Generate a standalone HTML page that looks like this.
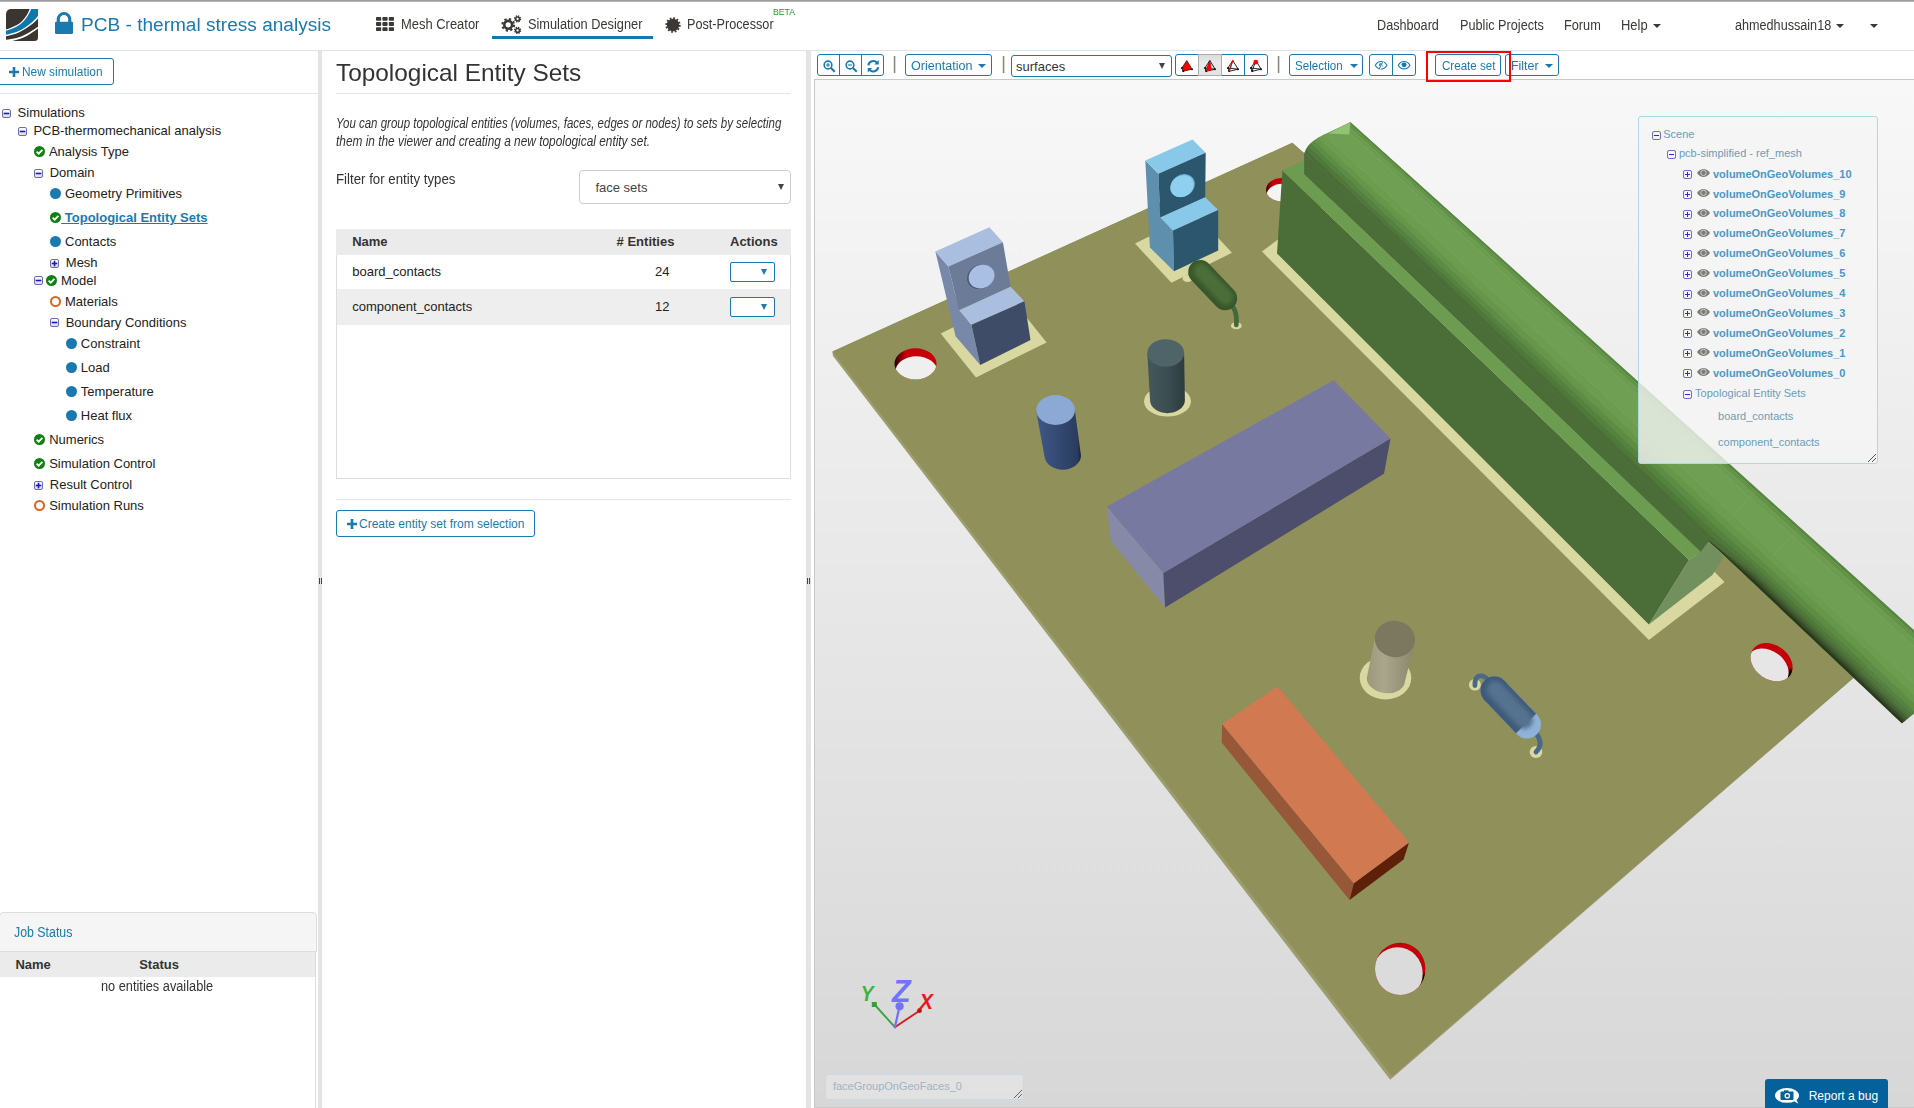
<!DOCTYPE html>
<html lang="en"><head><meta charset="utf-8"><title>PCB - thermal stress analysis</title>
<style>
html,body{margin:0;padding:0}
body{width:1914px;height:1108px;position:relative;overflow:hidden;background:#fff;font-family:'Liberation Sans',sans-serif}
.t{position:absolute;white-space:nowrap;line-height:1;display:inline-block;transform-origin:0 50%}
.a{position:absolute;box-sizing:border-box}
.btn{position:absolute;box-sizing:border-box;border:1px solid #1a7aaf;border-radius:3px;background:#fff}
.car{position:absolute;width:0;height:0;border-left:4px solid transparent;border-right:4px solid transparent;border-top:4px solid #3b3835}
.carb{position:absolute;width:0;height:0;border-left:4px solid transparent;border-right:4px solid transparent;border-top:4px solid #1a7aaf}
.sep{position:absolute;width:1px;height:17px;top:56px;margin-left:.5px;background:#8a847c;box-shadow:-1px 0 0 rgba(236,200,150,.55),1px 0 0 rgba(160,160,205,.45)}
.pm{position:absolute;box-sizing:border-box;width:9px;height:9px;border:1px solid #6c6cb8;border-radius:2px;background:linear-gradient(#fff,#ddd)}
.pm i{position:absolute;left:1px;top:3px;width:5px;height:1px;background:#1818d8;box-shadow:0 0 0 .3px #1818d8}
.pm b{position:absolute;left:3px;top:1px;width:1px;height:5px;background:#1818d8;box-shadow:0 0 0 .3px #1818d8}
.pl{border-color:#7070c0;background:#f4f4fa}.pl i,.pl b{box-shadow:none;background:#2a2ad8}
.dot{position:absolute;width:11px;height:11px;border-radius:50%;box-sizing:border-box}
svg{position:absolute;overflow:visible}
</style></head><body>
<!-- top chrome line + navbar -->
<div class="a" style="left:0;top:0;width:1914px;height:2px;background:linear-gradient(#8c8c8c,#c8c8c8)"></div>
<div class="a" style="left:0;top:50px;width:1914px;height:1px;background:#e2e2e2"></div>
<!-- logo -->
<svg style="left:6px;top:9px" width="32" height="32" viewBox="0 0 32 32">
<defs><clipPath id="lg"><path d="M5 0H32V28a4 4 0 0 1-4 4H0V5a5 5 0 0 1 5-5Z"/></clipPath></defs>
<g clip-path="url(#lg)"><rect width="32" height="32" fill="#3a3531"/><path d="M-1 20.90C1.73 20.13 7.70 17.78 10.40 16.30C13.10 14.82 14.52 13.62 16.20 12.00C17.88 10.38 19.25 8.60 20.50 6.60C21.75 4.60 23.17 1.10 23.70 0.00L33 0L33 33L-1 33Z" fill="#fff"/><path d="M-1 22.10C1.73 21.37 7.58 19.22 10.40 17.70C13.22 16.18 14.98 14.85 16.90 13.00C18.82 11.15 20.52 8.77 21.90 6.60C23.28 4.43 24.65 1.10 25.20 0.00L33 0L33 33L-1 33Z" fill="#0d78ad"/><path d="M-1 25.90C1.73 25.40 7.22 24.15 10.40 22.90C13.58 21.65 16.45 20.05 19.10 18.40C21.75 16.75 24.45 14.55 26.30 13.00C28.15 11.45 29.08 10.40 30.20 9.10C31.32 7.80 32.53 5.85 33.00 5.20L33 33L-1 33Z" fill="#fff"/><path d="M-1 27.40C1.73 26.92 7.17 25.77 10.40 24.50C13.63 23.23 16.70 21.42 19.40 19.80C22.10 18.18 24.33 16.68 26.60 14.80C28.87 12.92 31.93 9.55 33.00 8.50L33 33L-1 33Z" fill="#3a3531"/><path d="M-1 30.90C1.73 30.60 7.17 29.98 10.40 29.10C13.63 28.22 16.70 26.90 19.40 25.60C22.10 24.30 24.33 22.73 26.60 21.30C28.87 19.87 31.93 17.72 33.00 17.00L33 33L-1 33Z" fill="#fff"/><path d="M4.50 32.50C5.42 32.25 7.82 31.68 10.00 31.00C12.18 30.32 15.13 29.48 17.60 28.40C20.07 27.32 22.23 26.10 24.80 24.50C27.37 22.90 31.63 19.75 33.00 18.80L33 33L4.50 33Z" fill="#3a3531"/>
</g></svg>
<!-- lock -->
<svg style="left:55px;top:12px" width="18" height="22" viewBox="0 0 18 22"><path d="M1.700 9.700V7.300a7.300 7.300 0 0 1 14.600 0V9.700h.5A1.200 1.200 0 0 1 18 10.900v9.900A1.200 1.200 0 0 1 16.800 22H1.200A1.200 1.200 0 0 1 0 20.800v-9.900A1.200 1.200 0 0 1 1.200 9.700Zm3.100 0h8.400V7.300a4.200 4.200 0 0 0-8.400 0Z" fill="#1a7aaf"/></svg>
<!-- nav icons -->
<svg style="left:375.5px;top:16.8px" width="18" height="14" viewBox="0 0 18 14" fill="#3b3835"><rect x="0" y="0" width="5.2" height="3.8" rx=".8"/><rect x="6.4" y="0" width="5.2" height="3.8" rx=".8"/><rect x="12.8" y="0" width="5.2" height="3.8" rx=".8"/><rect x="0" y="5.1" width="5.2" height="3.8" rx=".8"/><rect x="6.4" y="5.1" width="5.2" height="3.8" rx=".8"/><rect x="12.8" y="5.1" width="5.2" height="3.8" rx=".8"/><rect x="0" y="10.2" width="5.2" height="3.8" rx=".8"/><rect x="6.4" y="10.2" width="5.2" height="3.8" rx=".8"/><rect x="12.8" y="10.2" width="5.2" height="3.8" rx=".8"/></svg>
<svg style="left:501px;top:15px" width="21" height="20" viewBox="0 0 21 20">
<g fill="none" stroke="#3b3835">
<circle cx="7.2" cy="9.8" r="3.9" stroke-width="2.6"/><circle cx="7.2" cy="9.8" r="5.9" stroke-width="2" stroke-dasharray="2.3 2.33"/>
<circle cx="16.6" cy="3.9" r="1.9" stroke-width="1.5"/><circle cx="16.6" cy="3.9" r="3" stroke-width="1.3" stroke-dasharray="1.3 1.056"/>
<circle cx="16.6" cy="15.4" r="1.9" stroke-width="1.5"/><circle cx="16.6" cy="15.4" r="3" stroke-width="1.3" stroke-dasharray="1.3 1.056"/>
</g></svg>
<svg style="left:664.6px;top:17px" width="16" height="16" viewBox="-8 -8 16 16"><circle r="6.2" fill="#3b3835"/><circle r="6.7" fill="none" stroke="#3b3835" stroke-width="2" stroke-dasharray="1.75 1.758"/></svg>
<div class="a" style="left:492px;top:36px;width:161px;height:3px;background:#1378ab"></div>
<div class="car" style="left:1653px;top:24px"></div>
<div class="car" style="left:1836px;top:24px"></div>
<div class="car" style="left:1870px;top:24px"></div>

<!-- LEFT PANEL -->
<div class="btn" style="left:-3px;top:58px;width:117px;height:27px"></div>
<svg style="left:9px;top:67px" width="10" height="10" viewBox="0 0 10 10"><path d="M3.7 0h2.6v3.7H10v2.6H6.3V10H3.7V6.3H0V3.7h3.7Z" fill="#1a7aaf"/></svg>
<div class="a" style="left:0;top:93px;width:318px;height:1px;background:#e6e6e6"></div>
<div class="pm" style="left:2.0px;top:109.0px"><i></i></div>
<div class="pm" style="left:18.0px;top:127.0px"><i></i></div>
<div class="pm" style="left:34.0px;top:168.6px"><i></i></div>
<div class="pm" style="left:50.0px;top:258.6px"><i></i><b></b></div>
<div class="pm" style="left:34.0px;top:276.3px"><i></i></div>
<div class="pm" style="left:50.0px;top:318.4px"><i></i></div>
<div class="pm" style="left:34.0px;top:480.5px"><i></i><b></b></div>
<svg style="left:34.0px;top:146.2px" width="11" height="11" viewBox="0 0 11 11"><circle cx="5.500" cy="5.500" r="5.500" fill="#0f7f12"/><path d="M2.600 5.700L4.700 7.700L8.400 3.800" fill="none" stroke="#fff" stroke-width="1.800"/></svg>
<div class="dot" style="left:50.0px;top:188.3px;background:#1a7aaf"></div>
<svg style="left:50.0px;top:212.3px" width="11" height="11" viewBox="0 0 11 11"><circle cx="5.500" cy="5.500" r="5.500" fill="#0f7f12"/><path d="M2.600 5.700L4.700 7.700L8.400 3.800" fill="none" stroke="#fff" stroke-width="1.800"/></svg>
<div class="dot" style="left:50.0px;top:236.2px;background:#1a7aaf"></div>
<svg style="left:46.0px;top:275.1px" width="11" height="11" viewBox="0 0 11 11"><circle cx="5.500" cy="5.500" r="5.500" fill="#0f7f12"/><path d="M2.600 5.700L4.700 7.700L8.400 3.800" fill="none" stroke="#fff" stroke-width="1.800"/></svg>
<div class="dot" style="left:50.0px;top:296.2px;border:2px solid #e2601c;background:#fff"></div>
<div class="dot" style="left:66.1px;top:338.2px;background:#1a7aaf"></div>
<div class="dot" style="left:66.1px;top:362.3px;background:#1a7aaf"></div>
<div class="dot" style="left:66.1px;top:386.3px;background:#1a7aaf"></div>
<div class="dot" style="left:66.1px;top:410.4px;background:#1a7aaf"></div>
<svg style="left:34.0px;top:434.2px" width="11" height="11" viewBox="0 0 11 11"><circle cx="5.500" cy="5.500" r="5.500" fill="#0f7f12"/><path d="M2.600 5.700L4.700 7.700L8.400 3.800" fill="none" stroke="#fff" stroke-width="1.800"/></svg>
<svg style="left:34.0px;top:458.3px" width="11" height="11" viewBox="0 0 11 11"><circle cx="5.500" cy="5.500" r="5.500" fill="#0f7f12"/><path d="M2.600 5.700L4.700 7.700L8.400 3.800" fill="none" stroke="#fff" stroke-width="1.800"/></svg>
<div class="dot" style="left:34.0px;top:500.3px;border:2px solid #e2601c;background:#fff"></div>
<div class="a" style="left:318px;top:51px;width:4px;height:1057px;background:#e4e4e4"></div>
<div class="a" style="left:319px;top:578px;width:1px;height:6px;background:#444"></div><div class="a" style="left:321px;top:578px;width:1px;height:6px;background:#444"></div>
<!-- job status -->
<div class="a" style="left:-1px;top:912px;width:318px;height:40px;background:#f5f5f5;border:1px solid #ddd;border-radius:4px 4px 0 0"></div>
<div class="a" style="left:0;top:952px;width:315px;height:25px;background:#ebebeb"></div>
<div class="a" style="left:315px;top:952px;width:1px;height:156px;background:#ddd"></div>

<!-- MIDDLE PANEL -->
<div class="a" style="left:336px;top:93px;width:455px;height:1px;background:#e6e6e6"></div>
<div class="a" style="left:579px;top:170px;width:212px;height:34px;border:1px solid #ccc;border-radius:4px;background:#fff"></div>
<div class="a" style="left:778px;top:184px;width:0;height:0;border-left:3px solid transparent;border-right:3px solid transparent;border-top:6px solid #444"></div>
<div class="a" style="left:336px;top:229px;width:455px;height:250px;border:1px solid #ddd;border-top:none;background:#fff"></div>
<div class="a" style="left:336px;top:229px;width:455px;height:26px;background:#ebebeb"></div>
<div class="a" style="left:337px;top:289px;width:453px;height:36px;background:#eeeeee"></div>
<div class="btn" style="left:730px;top:262px;width:45px;height:20px;border-radius:2px"></div>
<div class="a" style="left:761px;top:269px;width:0;height:0;border-left:3.5px solid transparent;border-right:3.5px solid transparent;border-top:6px solid #1a7aaf"></div>
<div class="btn" style="left:730px;top:297px;width:45px;height:20px;border-radius:2px"></div>
<div class="a" style="left:761px;top:304px;width:0;height:0;border-left:3.5px solid transparent;border-right:3.5px solid transparent;border-top:6px solid #1a7aaf"></div>
<div class="a" style="left:336px;top:499px;width:455px;height:1px;background:#e6e6e6"></div>
<div class="btn" style="left:336px;top:510px;width:199px;height:27px"></div>
<svg style="left:346.5px;top:519px" width="10" height="10" viewBox="0 0 10 10"><path d="M3.7 0h2.6v3.7H10v2.6H6.3V10H3.7V6.3H0V3.7h3.7Z" fill="#1a7aaf"/></svg>
<div class="a" style="left:806px;top:51px;width:5px;height:1057px;background:#e4e4e4"></div>
<div class="a" style="left:807px;top:578px;width:1px;height:6px;background:#444"></div><div class="a" style="left:809px;top:578px;width:1px;height:6px;background:#444"></div>

<!-- VIEWER TOOLBAR -->
<div class="btn" style="left:817px;top:54px;width:23px;height:22px;border-radius:3px 0 0 3px"></div>
<div class="btn" style="left:839px;top:54px;width:23px;height:22px;border-radius:0"></div>
<div class="btn" style="left:861px;top:54px;width:23px;height:22px;border-radius:0 3px 3px 0"></div>
<svg style="left:823px;top:60px" width="12.500" height="12.500" viewBox="0 0 12 12" fill="none" stroke="#1a7aaf"><circle cx="4.8" cy="4.8" r="3.7" stroke-width="1.5"/><path d="M7.6 7.6L11.3 11.3" stroke-width="2"/><path d="M2.8 4.8h4M4.8 2.8v4" stroke-width="1.1"/></svg>
<svg style="left:845px;top:60px" width="12.500" height="12.500" viewBox="0 0 12 12" fill="none" stroke="#1a7aaf"><circle cx="4.8" cy="4.8" r="3.7" stroke-width="1.5"/><path d="M7.6 7.6L11.3 11.3" stroke-width="2"/><path d="M2.8 4.8h4" stroke-width="1.1"/></svg>
<svg style="left:867px;top:60px" width="12.500" height="12.500" viewBox="0 0 12 12" fill="none" stroke="#1a7aaf" stroke-width="2"><path d="M1.3 5.2A4.8 4.8 0 0 1 9.6 2.6"/><path d="M10.7 6.8A4.8 4.8 0 0 1 2.4 9.4"/><path d="M11.3 0v4.3H7Z" fill="#1a7aaf" stroke="none"/><path d="M.7 12V7.7H5Z" fill="#1a7aaf" stroke="none"/></svg>
<div class="sep" style="left:893px"></div>
<div class="btn" style="left:905px;top:54px;width:87px;height:22px"></div>
<div class="carb" style="left:978px;top:64px"></div>
<div class="sep" style="left:1002px"></div>
<div class="btn" style="left:1011px;top:55px;width:161px;height:22px;border-radius:3px"></div>
<div class="a" style="left:1159px;top:63px;width:0;height:0;border-left:3px solid transparent;border-right:3px solid transparent;border-top:6px solid #444"></div>
<div class="btn" style="left:1175px;top:54px;width:24px;height:22px;border-radius:3px 0 0 3px"></div>
<div class="btn" style="left:1221px;top:54px;width:24px;height:22px;border-radius:0"></div>
<div class="btn" style="left:1244px;top:54px;width:24px;height:22px;border-radius:0 3px 3px 0"></div>
<div class="a" style="left:1198px;top:54px;width:24px;height:22px;border:1px solid #adadad;background:linear-gradient(#dcdcdc,#e8e8e8 40%,#e4e4e4)"></div>
<svg style="left:1181px;top:60px" width="12" height="12" viewBox="0 0 12 12"><path d="M5.800.500L.900 8L2.100 11.300L11.100 9.200Z" fill="#f00"/><path d="M5.800.500L.900 8L2.100 11.300L11.100 9.200Z" fill="none" stroke="#111" stroke-width=".7"/><circle cx="1" cy="8" r="1" fill="#111"/><circle cx="2.200" cy="11.100" r="1.100" fill="#111"/><circle cx="11" cy="9.200" r="1" fill="#111"/></svg>
<svg style="left:1204px;top:60px" width="12" height="12" viewBox="0 0 12 12"><path d="M5.800.500L.900 8L2.100 11.300L11.100 9.200ZM5.800.500L2.100 11.300M.900 8L11.100 9.200" fill="none" stroke="#111" stroke-width=".9" stroke-linejoin="round"/><circle cx="1" cy="8" r="1" fill="#111"/><circle cx="2.200" cy="11.100" r="1.100" fill="#111"/><circle cx="11" cy="9.200" r="1" fill="#111"/><path d="M5.800.500L2.100 11.300L7.400 10L6.800 3Z" fill="#f00"/></svg>
<svg style="left:1227px;top:60px" width="12" height="12" viewBox="0 0 12 12"><path d="M5.800.500L.900 8L2.100 11.300L11.100 9.200ZM5.800.500L2.100 11.300M.900 8L11.100 9.200" fill="none" stroke="#111" stroke-width=".9" stroke-linejoin="round"/><circle cx="1" cy="8" r="1" fill="#111"/><circle cx="2.200" cy="11.100" r="1.100" fill="#111"/><circle cx="11" cy="9.200" r="1" fill="#111"/><path d="M5.800.500L2.100 11.300" stroke="#f00" stroke-width="1"/></svg>
<svg style="left:1250px;top:60px" width="12" height="12" viewBox="0 0 12 12"><path d="M5.800.500L.900 8L2.100 11.300L11.100 9.200ZM5.800.500L2.100 11.300M.900 8L11.100 9.200" fill="none" stroke="#111" stroke-width=".9" stroke-linejoin="round"/><circle cx="1" cy="8" r="1" fill="#111"/><circle cx="2.200" cy="11.100" r="1.100" fill="#111"/><circle cx="11" cy="9.200" r="1" fill="#111"/><circle cx="5.800" cy="2.200" r="2.400" fill="#f00"/></svg>
<div class="sep" style="left:1277px"></div>
<div class="btn" style="left:1289px;top:54px;width:74px;height:22px"></div>
<div class="carb" style="left:1349.5px;top:64px"></div>
<div class="btn" style="left:1369px;top:54px;width:24px;height:22px;border-radius:3px 0 0 3px"></div>
<div class="btn" style="left:1392px;top:54px;width:24px;height:22px;border-radius:0 3px 3px 0"></div>
<svg style="left:1375px;top:61px" width="12.200" height="8.300" viewBox="0 0 14 10" preserveAspectRatio="none"><path d="M.3 5C2 1.8 4.4.5 7 .5S12 1.800 13.700 5C12 8.200 9.600 9.500 7 9.500S2 8.200.3 5Z" fill="none" stroke="#1a7aaf" stroke-width="1.2"/><circle cx="7" cy="4.700" r="2.400" fill="#1a7aaf"/><path d="M9.800 0L5.200 10" stroke="#fff" stroke-width="2.200"/><path d="M9.300 0L4.700 10" stroke="#1a7aaf" stroke-width="1.100"/></svg>
<svg style="left:1397.900px;top:60.900px" width="12.200" height="8.300" viewBox="0 0 14 10" preserveAspectRatio="none"><path d="M.3 5C2 1.800 4.400.5 7 .5S12 1.800 13.700 5C12 8.200 9.600 9.500 7 9.500S2 8.200.3 5Z" fill="#fff" stroke="#1a7aaf" stroke-width="1.300"/><circle cx="7" cy="4.600" r="2.900" fill="#1a7aaf"/></svg>
<div class="btn" style="left:1435px;top:54px;width:66px;height:22px"></div>
<div class="btn" style="left:1505px;top:54px;width:54px;height:22px"></div>
<div class="carb" style="left:1545px;top:64px"></div>

<!-- CANVAS -->
<div class="a" style="left:814px;top:79px;width:1100px;height:1029px;background:linear-gradient(#f8f8f8,#d7d7d7);border:1px solid #c8c8c8;border-right:none;overflow:hidden">
<svg style="left:-815px;top:-80px" width="1914" height="1108" viewBox="0 0 1914 1108">
<defs>
<linearGradient id="gcyl" gradientUnits="userSpaceOnUse" x1="1600" y1="348" x2="1550" y2="402.500">
<stop offset="0" stop-color="#507e3e"/><stop offset=".07" stop-color="#6a9a4e"/><stop offset=".2" stop-color="#6f9f53"/><stop offset=".5" stop-color="#6a9a4f"/><stop offset=".62" stop-color="#5a8844"/><stop offset=".78" stop-color="#4a6e38"/><stop offset=".9" stop-color="#3c5a2c"/><stop offset="1" stop-color="#22341a"/></linearGradient>
<linearGradient id="gbl" x1="0" x2="1"><stop offset="0" stop-color="#40588a"/><stop offset=".55" stop-color="#33486f"/><stop offset=".92" stop-color="#2a3c5e"/><stop offset="1" stop-color="#16223a"/></linearGradient>
<linearGradient id="gtl" x1="0" x2="1"><stop offset="0" stop-color="#44585c"/><stop offset=".6" stop-color="#3a4c4f"/><stop offset="1" stop-color="#2c3a3c"/></linearGradient>
<linearGradient id="gtn" x1="0" x2="1"><stop offset="0" stop-color="#9c987c"/><stop offset=".35" stop-color="#aaa68c"/><stop offset="1" stop-color="#8a866c"/></linearGradient>
<linearGradient id="gr1" gradientUnits="userSpaceOnUse" x1="894" y1="0" x2="937" y2="0"><stop offset="0" stop-color="#100"/><stop offset=".1" stop-color="#600004"/><stop offset=".28" stop-color="#c40008"/><stop offset="1" stop-color="#c80008"/></linearGradient>
<linearGradient id="gr2" gradientUnits="userSpaceOnUse" x1="1266" y1="0" x2="1298" y2="0"><stop offset="0" stop-color="#400"/><stop offset=".2" stop-color="#c40008"/><stop offset="1" stop-color="#c80008"/></linearGradient>
<filter id="bl1" x="-50%" y="-50%" width="200%" height="200%"><feGaussianBlur stdDeviation="1.2"/></filter>
<filter id="bl2" x="-50%" y="-50%" width="200%" height="200%"><feGaussianBlur stdDeviation="2"/></filter>
<clipPath id="cylc"><path d="M1304.100 174L1304.100 158C1304.100 148 1310 140.500 1328.400 132.500L1350.500 122L1914 630V713.400L1901.800 723.400L1708.800 541.100L1700.800 551.700Z"/></clipPath>
<clipPath id="h1"><ellipse cx="915.500" cy="363.800" rx="21" ry="15.600"/></clipPath>
<clipPath id="h2"><ellipse cx="1282" cy="189.700" rx="16" ry="11.700"/></clipPath>
<clipPath id="h3"><ellipse cx="1771.600" cy="662.200" rx="22.700" ry="17.100" transform="rotate(35 1771.600 662.200)"/></clipPath>
<clipPath id="h4"><ellipse cx="1400.200" cy="968.900" rx="25.200" ry="26.200"/></clipPath>
</defs>
<!-- board -->
<polygon points="832.3,351.4 1292.3,142.8 1880,655 1390.2,1079.7 833,356" fill="#9c9d6e"/>
<polygon points="832.6,351.4 1292.3,142.8 1880,655 1392,1076.5" fill="#8f905a"/>
<!-- holes -->
<g clip-path="url(#h1)"><rect x="890" y="340" width="60" height="50" fill="url(#gr1)"/><ellipse cx="916.400" cy="371.700" rx="21" ry="15.500" fill="#efefef"/></g>
<g clip-path="url(#h2)"><rect x="1260" y="170" width="50" height="40" fill="url(#gr2)"/><ellipse cx="1282.500" cy="195.500" rx="16" ry="11.700" fill="#f4f4f4"/></g>
<g clip-path="url(#h3)"><rect x="1740" y="630" width="70" height="70" fill="#c40008"/><ellipse cx="1791" cy="678" rx="5" ry="9" fill="#100" filter="url(#bl1)"/><ellipse cx="1767.600" cy="667.700" rx="22.700" ry="17.100" transform="rotate(35 1767.600 667.700)" fill="#e6e6e6"/></g>
<g clip-path="url(#h4)"><rect x="1370" y="940" width="60" height="60" fill="#c40008"/><ellipse cx="1425" cy="982" rx="4" ry="9" fill="#100" filter="url(#bl1)"/><ellipse cx="1397.500" cy="973.500" rx="25.200" ry="26.200" fill="#dbdbdb"/></g>
<!-- connector pad -->
<polygon points="1262,251.6 1648.9,640 1724.6,582 1337.700,193.600" fill="#d8d8a0"/>
<!-- connector -->
<polygon points="1282.4,170.4 1689,559.9 1648.9,624.4 1277,253.4" fill="#4b6d38"/>
<polygon points="1689,559.9 1700.8,551.7 1708.8,541.1 1723.6,557 1712.4,575 1648.9,624.4" fill="#72905e"/>
<polygon points="1282.4,170.4 1304.1,160.5 1304.1,174 1700.8,551.7 1689,559.9" fill="#6c9c50"/>
<g clip-path="url(#cylc)"><polygon points="1322.0,96.3 1757.5,488.9 1755.6,491.0 1320.1,97.4" fill="#57873f" stroke="#57873f" stroke-width=".6"/><polygon points="1320.1,97.4 1755.6,491.0 1753.1,493.6 1317.8,98.8" fill="#639347" stroke="#639347" stroke-width=".6"/><polygon points="1317.8,98.8 1753.1,493.6 1749.7,497.3 1314.5,100.8" fill="#6c9c50" stroke="#6c9c50" stroke-width=".6"/><polygon points="1314.5,100.8 1749.7,497.3 1733.2,515.0 1298.5,110.3" fill="#6f9f53" stroke="#6f9f53" stroke-width=".6"/><polygon points="1298.5,110.3 1733.2,515.0 1727.3,521.3 1292.9,113.7" fill="#6c9c50" stroke="#6c9c50" stroke-width=".6"/><polygon points="1292.9,113.7 1727.3,521.3 1722.9,526.0 1288.6,116.2" fill="#669649" stroke="#669649" stroke-width=".6"/><polygon points="1288.6,116.2 1722.9,526.0 1719.0,530.1 1284.9,118.5" fill="#5e8c45" stroke="#5e8c45" stroke-width=".6"/><polygon points="1284.9,118.5 1719.0,530.1 1715.6,533.8 1281.6,120.4" fill="#56823f" stroke="#56823f" stroke-width=".6"/><polygon points="1281.6,120.4 1715.6,533.8 1712.2,537.4 1278.3,122.4" fill="#4f783b" stroke="#4f783b" stroke-width=".6"/><polygon points="1278.3,122.4 1712.2,537.4 1708.8,541.1 1275.0,124.3" fill="#4b6d38" stroke="#4b6d38" stroke-width=".6"/><polygon points="1757.5,488.9 1800.0,527.2 1798.0,529.3 1755.6,491.0" fill="#57873f" stroke="#57873f" stroke-width=".6"/><polygon points="1755.6,491.0 1798.0,529.3 1795.5,532.0 1753.1,493.6" fill="#639347" stroke="#639347" stroke-width=".6"/><polygon points="1753.1,493.6 1795.5,532.0 1792.0,535.7 1749.7,497.3" fill="#6c9c50" stroke="#6c9c50" stroke-width=".6"/><polygon points="1749.7,497.3 1792.0,535.7 1774.0,554.7 1733.2,515.0" fill="#6f9f53" stroke="#6f9f53" stroke-width=".6"/><polygon points="1733.2,515.0 1774.0,554.7 1769.0,560.0 1727.3,521.3" fill="#6c9c50" stroke="#6c9c50" stroke-width=".6"/><polygon points="1727.3,521.3 1769.0,560.0 1765.0,564.2 1722.9,526.0" fill="#669649" stroke="#669649" stroke-width=".6"/><polygon points="1722.9,526.0 1765.0,564.2 1761.5,567.9 1719.0,530.1" fill="#5e8c45" stroke="#5e8c45" stroke-width=".6"/><polygon points="1719.0,530.1 1761.5,567.9 1759.0,570.5 1715.6,533.8" fill="#56823f" stroke="#56823f" stroke-width=".6"/><polygon points="1715.6,533.8 1759.0,570.5 1756.8,572.9 1712.2,537.4" fill="#4f783b" stroke="#4f783b" stroke-width=".6"/><polygon points="1712.2,537.4 1756.8,572.9 1755.0,574.7 1708.8,541.1" fill="#4b6d38" stroke="#4b6d38" stroke-width=".6"/><polygon points="1708.8,541.1 1755.0,574.7 1753.2,576.6 1708.8,541.1" fill="#425f31" stroke="#425f31" stroke-width=".6"/><polygon points="1708.8,541.1 1753.2,576.6 1751.8,578.2 1708.8,541.1" fill="#364e28" stroke="#364e28" stroke-width=".6"/><polygon points="1708.8,541.1 1751.8,578.2 1750.0,580.0 1708.8,541.1" fill="#273a1d" stroke="#273a1d" stroke-width=".6"/><polygon points="1800.0,527.2 1975.0,685.0 1973.0,687.4 1798.0,529.3" fill="#57873f" stroke="#57873f" stroke-width=".6"/><polygon points="1798.0,529.3 1973.0,687.4 1970.5,690.4 1795.5,532.0" fill="#639347" stroke="#639347" stroke-width=".6"/><polygon points="1795.5,532.0 1970.5,690.4 1967.0,694.6 1792.0,535.7" fill="#6c9c50" stroke="#6c9c50" stroke-width=".6"/><polygon points="1792.0,535.7 1967.0,694.6 1949.0,716.4 1774.0,554.7" fill="#6f9f53" stroke="#6f9f53" stroke-width=".6"/><polygon points="1774.0,554.7 1949.0,716.4 1944.0,722.4 1769.0,560.0" fill="#6c9c50" stroke="#6c9c50" stroke-width=".6"/><polygon points="1769.0,560.0 1944.0,722.4 1940.0,727.2 1765.0,564.2" fill="#669649" stroke="#669649" stroke-width=".6"/><polygon points="1765.0,564.2 1940.0,727.2 1936.5,731.4 1761.5,567.9" fill="#5e8c45" stroke="#5e8c45" stroke-width=".6"/><polygon points="1761.5,567.9 1936.5,731.4 1934.0,734.5 1759.0,570.5" fill="#56823f" stroke="#56823f" stroke-width=".6"/><polygon points="1759.0,570.5 1934.0,734.5 1931.8,737.2 1756.8,572.9" fill="#4f783b" stroke="#4f783b" stroke-width=".6"/><polygon points="1756.8,572.9 1931.8,737.2 1930.0,739.3 1755.0,574.7" fill="#4b6d38" stroke="#4b6d38" stroke-width=".6"/><polygon points="1755.0,574.7 1930.0,739.3 1928.2,741.4 1753.2,576.6" fill="#425f31" stroke="#425f31" stroke-width=".6"/><polygon points="1753.2,576.6 1928.2,741.4 1926.8,743.2 1751.8,578.2" fill="#364e28" stroke="#364e28" stroke-width=".6"/><polygon points="1751.8,578.2 1926.8,743.2 1925.0,745.3 1750.0,580.0" fill="#273a1d" stroke="#273a1d" stroke-width=".6"/></g>
<polygon points="1304.1,174 1304.1,152.3 1708.8,541.1 1700.8,551.7" fill="#4b6d38"/>
<polygon points="1328.4,133.4 1350.5,122 1349.2,134.500" fill="#90c474"/>
<!-- comp2 pad + body -->
<polygon points="1135,243.6 1171.4,282.7 1232,252.8 1195.600,213.700" fill="#d8d8a0"/>
<polygon points="1145.3,160.4 1158.4,173.8 1160.2,217.5 1173,230.5 1174,271.2 1149.9,247.4" fill="#5e90ae"/>
<polygon points="1145.3,160.4 1192.5,139.5 1205.7,152.7 1158.4,173.8" fill="#88c9e9"/>
<polygon points="1158.4,173.8 1205.7,152.7 1205.2,197.2 1160.2,217.5" fill="#2c566e"/>
<polygon points="1160.2,217.5 1205.2,197.2 1218.2,210.1 1173,230.5" fill="#88c9e9"/>
<polygon points="1173,230.5 1218.2,210.1 1218.2,250.5 1174,271.2" fill="#2c566e"/>
<ellipse cx="1182.600" cy="185.600" rx="12.800" ry="10.800" transform="rotate(-35 1182.600 185.600)" fill="#6fb4d6"/><ellipse cx="1182" cy="186.200" rx="12.200" ry="10.300" transform="rotate(-35 1182 186.200)" fill="#8fd0f0"/>
<!-- resistor -->
<ellipse cx="1187.500" cy="278.500" rx="5" ry="3.400" fill="#d8d8a0"/>
<ellipse cx="1236.300" cy="325.700" rx="5.400" ry="3.600" fill="#d8d8a0"/>
<path d="M1228 301C1234 306 1237.500 314 1236.300 325" fill="none" stroke="#44683a" stroke-width="4.600" stroke-linecap="round"/>
<path d="M1200.200 272L1225.100 298.300" stroke="#38562b" stroke-width="24" stroke-linecap="round"/>
<path d="M1201 271L1225.900 297.300" stroke="#4b6e39" stroke-width="15" stroke-linecap="round" filter="url(#bl2)"/>
<!-- comp1 pad + body -->
<polygon points="940.7,333.5 976,377.4 1046.6,342.4 1011.300,298.500" fill="#d8d8a0"/>
<polygon points="935.4,251.5 948.4,266.4 959.1,310.2 971.4,324.8 980.2,365.1 955.6,336.3" fill="#7888a8"/>
<polygon points="935.4,251.5 989.4,227.3 1002.9,242.3 948.4,266.4" fill="#aabee0"/>
<polygon points="948.4,266.4 1002.9,242.3 1010.6,286.8 959.1,310.2" fill="#6c7c98"/>
<polygon points="959.1,310.2 1010.6,286.8 1024.4,301.3 971.4,324.8" fill="#aabee0"/>
<polygon points="971.4,324.8 1024.4,301.3 1030.5,340.1 980.2,365.1" fill="#3e4c68"/>
<ellipse cx="980.600" cy="276.700" rx="14" ry="11.800" transform="rotate(-28 980.600 276.700)" fill="#4c5a74"/><ellipse cx="981.600" cy="276.500" rx="13.300" ry="11.500" transform="rotate(-28 981.600 276.500)" fill="#a9c0e4"/>
<!-- teal cylinder -->
<ellipse cx="1167.500" cy="401.300" rx="23.500" ry="15.300" fill="#d8d8a0"/>
<path d="M1147.300 353L1150 399.800A17.400 13 0 0 0 1184.900 400.500L1184.100 353Z" fill="url(#gtl)"/>
<ellipse cx="1165.700" cy="353" rx="18.400" ry="13.800" fill="#4e6468"/>
<!-- blue cylinder -->
<path d="M1036.100 410.500L1044.500 456.500A18.300 14.600 0 0 0 1081 455.700L1074.900 410.500Z" fill="url(#gbl)"/>
<ellipse cx="1055.600" cy="410" rx="19.400" ry="15" fill="#8ca8d4"/>
<!-- purple box -->
<polygon points="1106.9,506.5 1163.3,573.1 1165.1,607.4 1110.8,540.4" fill="#8789a9"/>
<polygon points="1163.3,573.1 1390.5,438.4 1384,473.8 1165.1,607.4" fill="#4c4e6c"/>
<polygon points="1106.9,506.5 1333.7,380.2 1390.5,438.4 1163.3,573.1" fill="#7779a1"/>
<!-- tan cylinder -->
<ellipse cx="1385.500" cy="678" rx="25.800" ry="21.400" fill="#d8d8a0"/>
<path d="M1374.900 637.400L1366.800 678A19.200 13.800 8 0 0 1405 681.300L1415.100 640.600Z" fill="url(#gtn)"/>
<ellipse cx="1394.900" cy="639" rx="20.200" ry="18.200" transform="rotate(8 1394.900 639)" fill="#7c7860"/>
<!-- capacitor -->
<ellipse cx="1474.900" cy="684.800" rx="6" ry="5.800" fill="#d8d8a0"/>
<ellipse cx="1536" cy="751.900" rx="6.300" ry="6" fill="#d8d8a0"/>
<path d="M1488.800 680.500C1484 674.500 1474.500 672.500 1474.900 685.500" fill="none" stroke="#4c6888" stroke-width="4.800" stroke-linecap="round"/>
<path d="M1533 730C1541.500 738.500 1542 746 1536 752" fill="none" stroke="#4c6888" stroke-width="4.800" stroke-linecap="round"/>
<path d="M1494.300 690.300L1527 724.500" stroke="#8fb2d9" stroke-width="27.900" stroke-linecap="round"/>
<path d="M1494.300 690.300L1494.400 690.400" stroke="#405a7a" stroke-width="27.900" stroke-linecap="round"/>
<path d="M1494.300 690.300L1526 723.500" stroke="#405a7a" stroke-width="27.900"/>
<path d="M1495.300 689.600L1524.500 720.300" stroke="#54728f" stroke-width="17" stroke-linecap="round" filter="url(#bl2)"/>
<!-- orange box -->
<polygon points="1222.1,724.1 1353.8,883.3 1349.5,900 1221.7,742.6" fill="#965838"/>
<polygon points="1353.8,883.3 1409,842.6 1403.6,859.5 1349.5,900" fill="#5e2008"/>
<polygon points="1222.1,724.1 1277.5,686.2 1409,842.6 1353.8,883.3" fill="#d17950"/>
<!-- axes -->
<g stroke-width="1.900" stroke-linecap="round">
<path d="M894.900 1027.200L874.500 1004.500" stroke="#3aa63a"/><path d="M894.900 1027.200L919.500 1010.700" stroke="#dc1c1c"/><path d="M894.900 1027.200L899.400 1007" stroke="#7070f8" stroke-width="2.200"/>
</g>
<circle cx="899.600" cy="1006.300" r="4.100" fill="#7272ff"/><rect x="871.800" y="1002" width="5" height="5" fill="#389c38"/><circle cx="919.500" cy="1010.700" r="2.400" fill="#c01414"/>
<text x="860.700" y="1000.800" font-family="'Liberation Sans',sans-serif" font-size="22" font-style="italic" font-weight="bold" fill="#3cb43c" textLength="12.800" lengthAdjust="spacingAndGlyphs">Y</text>
<text x="892" y="1001.900" font-family="'Liberation Sans',sans-serif" font-size="30.500" font-style="italic" font-weight="bold" fill="#7272ff">Z</text>
<text x="919.500" y="1008.900" font-family="'Liberation Sans',sans-serif" font-size="22" font-style="italic" font-weight="bold" fill="#e81818" textLength="13.500" lengthAdjust="spacingAndGlyphs">X</text>
</svg>

</div>
<div class="a" style="left:1426px;top:51px;width:85px;height:31px;border:2px solid #f00"></div>
<!-- scene tree panel -->
<div class="a" style="left:1638px;top:116px;width:240px;height:348px;border:1px solid #add8e6;border-radius:3px;background:rgba(245,245,245,.8)"></div>
<svg style="left:1868px;top:454px" width="8" height="8" viewBox="0 0 8 8" stroke="#555" stroke-width="1"><path d="M0 8L8 0M4 8L8 4"/></svg>
<div class="pm pl" style="left:1651.6px;top:131.0px"><i></i></div>
<div class="pm pl" style="left:1667.3px;top:150.0px"><i></i></div>
<div class="pm pl" style="left:1683.0px;top:169.8px"><i></i><b></b></div>
<svg style="left:1696.5px;top:168.8px" width="13" height="8" viewBox="0 0 13 8"><path d="M0 4C1.800 1.200 4.100 0 6.500 0S11.200 1.200 13 4C11.200 6.800 8.900 8 6.500 8S1.800 6.800 0 4Z" fill="#7c7c78"/><circle cx="6.500" cy="3.800" r="2.700" fill="none" stroke="#d8d8d4" stroke-width=".9"/></svg>
<div class="pm pl" style="left:1683.0px;top:189.8px"><i></i><b></b></div>
<svg style="left:1696.5px;top:188.8px" width="13" height="8" viewBox="0 0 13 8"><path d="M0 4C1.800 1.200 4.100 0 6.500 0S11.200 1.200 13 4C11.200 6.800 8.900 8 6.500 8S1.800 6.800 0 4Z" fill="#7c7c78"/><circle cx="6.500" cy="3.800" r="2.700" fill="none" stroke="#d8d8d4" stroke-width=".9"/></svg>
<div class="pm pl" style="left:1683.0px;top:209.7px"><i></i><b></b></div>
<svg style="left:1696.5px;top:208.7px" width="13" height="8" viewBox="0 0 13 8"><path d="M0 4C1.800 1.200 4.100 0 6.500 0S11.200 1.200 13 4C11.200 6.800 8.900 8 6.500 8S1.800 6.800 0 4Z" fill="#7c7c78"/><circle cx="6.500" cy="3.800" r="2.700" fill="none" stroke="#d8d8d4" stroke-width=".9"/></svg>
<div class="pm pl" style="left:1683.0px;top:229.7px"><i></i><b></b></div>
<svg style="left:1696.5px;top:228.7px" width="13" height="8" viewBox="0 0 13 8"><path d="M0 4C1.800 1.200 4.100 0 6.500 0S11.200 1.200 13 4C11.200 6.800 8.900 8 6.500 8S1.800 6.800 0 4Z" fill="#7c7c78"/><circle cx="6.500" cy="3.800" r="2.700" fill="none" stroke="#d8d8d4" stroke-width=".9"/></svg>
<div class="pm pl" style="left:1683.0px;top:249.6px"><i></i><b></b></div>
<svg style="left:1696.5px;top:248.6px" width="13" height="8" viewBox="0 0 13 8"><path d="M0 4C1.800 1.200 4.100 0 6.500 0S11.200 1.200 13 4C11.200 6.800 8.900 8 6.500 8S1.800 6.800 0 4Z" fill="#7c7c78"/><circle cx="6.500" cy="3.800" r="2.700" fill="none" stroke="#d8d8d4" stroke-width=".9"/></svg>
<div class="pm pl" style="left:1683.0px;top:269.5px"><i></i><b></b></div>
<svg style="left:1696.5px;top:268.5px" width="13" height="8" viewBox="0 0 13 8"><path d="M0 4C1.800 1.200 4.100 0 6.500 0S11.200 1.200 13 4C11.200 6.800 8.900 8 6.500 8S1.800 6.800 0 4Z" fill="#7c7c78"/><circle cx="6.500" cy="3.800" r="2.700" fill="none" stroke="#d8d8d4" stroke-width=".9"/></svg>
<div class="pm pl" style="left:1683.0px;top:289.5px"><i></i><b></b></div>
<svg style="left:1696.5px;top:288.5px" width="13" height="8" viewBox="0 0 13 8"><path d="M0 4C1.800 1.200 4.100 0 6.500 0S11.200 1.200 13 4C11.200 6.800 8.900 8 6.500 8S1.800 6.800 0 4Z" fill="#7c7c78"/><circle cx="6.500" cy="3.800" r="2.700" fill="none" stroke="#d8d8d4" stroke-width=".9"/></svg>
<div class="pm pl" style="left:1683.0px;top:309.4px"><i></i><b></b></div>
<svg style="left:1696.5px;top:308.4px" width="13" height="8" viewBox="0 0 13 8"><path d="M0 4C1.800 1.200 4.100 0 6.500 0S11.200 1.200 13 4C11.200 6.800 8.900 8 6.500 8S1.800 6.800 0 4Z" fill="#7c7c78"/><circle cx="6.500" cy="3.800" r="2.700" fill="none" stroke="#d8d8d4" stroke-width=".9"/></svg>
<div class="pm pl" style="left:1683.0px;top:329.4px"><i></i><b></b></div>
<svg style="left:1696.5px;top:328.4px" width="13" height="8" viewBox="0 0 13 8"><path d="M0 4C1.800 1.200 4.100 0 6.500 0S11.200 1.200 13 4C11.200 6.800 8.900 8 6.500 8S1.800 6.800 0 4Z" fill="#7c7c78"/><circle cx="6.500" cy="3.800" r="2.700" fill="none" stroke="#d8d8d4" stroke-width=".9"/></svg>
<div class="pm pl" style="left:1683.0px;top:349.3px"><i></i><b></b></div>
<svg style="left:1696.5px;top:348.3px" width="13" height="8" viewBox="0 0 13 8"><path d="M0 4C1.800 1.200 4.100 0 6.500 0S11.200 1.200 13 4C11.200 6.800 8.900 8 6.500 8S1.800 6.800 0 4Z" fill="#7c7c78"/><circle cx="6.500" cy="3.800" r="2.700" fill="none" stroke="#d8d8d4" stroke-width=".9"/></svg>
<div class="pm pl" style="left:1683.0px;top:369.3px"><i></i><b></b></div>
<svg style="left:1696.5px;top:368.3px" width="13" height="8" viewBox="0 0 13 8"><path d="M0 4C1.800 1.200 4.100 0 6.500 0S11.200 1.200 13 4C11.200 6.800 8.900 8 6.500 8S1.800 6.800 0 4Z" fill="#7c7c78"/><circle cx="6.500" cy="3.800" r="2.700" fill="none" stroke="#d8d8d4" stroke-width=".9"/></svg>
<div class="pm pl" style="left:1683.0px;top:390.0px"><i></i></div>
<!-- facegroup box -->
<div class="a" style="left:825px;top:1074px;width:199px;height:26px;border:1px solid #c4dbe6;border-radius:3px;background:rgba(255,255,255,.25)"></div>
<svg style="left:1014px;top:1090px" width="8" height="8" viewBox="0 0 8 8" stroke="#666" stroke-width="1"><path d="M0 8L8 0M4 8L8 4"/></svg>
<!-- report a bug -->
<div class="a" style="left:1765px;top:1079px;width:123px;height:30px;background:#04619b;border-radius:3px 3px 0 0"></div>
<svg style="left:1774.500px;top:1088px" width="25" height="16" viewBox="0 0 25 16"><ellipse cx="12" cy="7.400" rx="12" ry="7.400" fill="#fff"/><path d="M17 12l6.500 3.800-3-5.500Z" fill="#fff"/><rect x="5.500" y="3.500" width="13" height="8.500" rx="1" fill="#04619b"/><rect x="9" y="2.300" width="4.500" height="2" fill="#04619b"/><circle cx="12.300" cy="7.800" r="2.800" fill="#fff"/><circle cx="12.300" cy="7.800" r="1.500" fill="#04619b"/></svg>
<span class="t" id="h1" style="left:81.0px;top:16.0px;font-size:18px;color:#1a7aaf;transform:scaleX(1.0590);">PCB - thermal stress analysis</span>
<span class="t" id="n1" style="left:401.3px;top:17.0px;font-size:14px;color:#3b3835;transform:scaleX(0.9244);">Mesh Creator</span>
<span class="t" id="n2" style="left:528.3px;top:17.0px;font-size:14px;color:#3b3835;transform:scaleX(0.9130);">Simulation Designer</span>
<span class="t" id="n3" style="left:687.4px;top:17.0px;font-size:14px;color:#3b3835;transform:scaleX(0.9049);">Post-Processor</span>
<span class="t" id="n4" style="left:772.5px;top:7.0px;font-size:9.5px;color:#2a9a2a;transform:scaleX(0.9167);">BETA</span>
<span class="t" id="r1" style="left:1376.8px;top:18.0px;font-size:14px;color:#3b3835;transform:scaleX(0.9036);">Dashboard</span>
<span class="t" id="r2" style="left:1459.6px;top:18.0px;font-size:14px;color:#3b3835;transform:scaleX(0.9061);">Public Projects</span>
<span class="t" id="r3" style="left:1564.0px;top:18.0px;font-size:14px;color:#3b3835;transform:scaleX(0.9097);">Forum</span>
<span class="t" id="r4" style="left:1621.4px;top:18.0px;font-size:14px;color:#3b3835;transform:scaleX(0.9237);">Help</span>
<span class="t" id="r5" style="left:1735.0px;top:18.0px;font-size:14px;color:#3b3835;transform:scaleX(0.9021);">ahmedhussain18</span>
<span class="t" id="b1" style="left:911.4px;top:60.0px;font-size:12px;color:#1a7aaf;transform:scaleX(1.0459);">Orientation</span>
<span class="t" id="b2" style="left:1295.4px;top:60.0px;font-size:12px;color:#1a7aaf;transform:scaleX(0.9641);">Selection</span>
<span class="t" id="b3" style="left:1441.6px;top:60.0px;font-size:12px;color:#1a7aaf;transform:scaleX(0.9646);">Create set</span>
<span class="t" id="b4" style="left:1511.4px;top:60.0px;font-size:12px;color:#1a7aaf;transform:scaleX(1.0348);">Filter</span>
<span class="t" id="b5" style="left:1016.0px;top:60.0px;font-size:13px;color:#333;">surfaces</span>
<span class="t" id="l0" style="left:21.6px;top:66.0px;font-size:12px;color:#1a7aaf;transform:scaleX(0.9905);">New simulation</span>
<span class="t" id="tr0" style="left:17.6px;top:106.0px;font-size:13px;color:#222;">Simulations</span>
<span class="t" id="tr1" style="left:33.4px;top:124.0px;font-size:13px;color:#222;">PCB-thermomechanical analysis</span>
<span class="t" id="tr2" style="left:48.9px;top:145.0px;font-size:13px;color:#222;">Analysis Type</span>
<span class="t" id="tr3" style="left:49.7px;top:166.0px;font-size:13px;color:#222;">Domain</span>
<span class="t" id="tr4" style="left:65.0px;top:187.0px;font-size:13px;color:#222;">Geometry Primitives</span>
<span class="t" id="tr5" style="left:65.0px;top:235.0px;font-size:13px;color:#222;">Contacts</span>
<span class="t" id="tr6" style="left:65.8px;top:256.0px;font-size:13px;color:#222;">Mesh</span>
<span class="t" id="tr7" style="left:61.0px;top:274.0px;font-size:13px;color:#222;">Model</span>
<span class="t" id="tr8" style="left:65.0px;top:295.0px;font-size:13px;color:#222;">Materials</span>
<span class="t" id="tr9" style="left:65.7px;top:316.0px;font-size:13px;color:#222;">Boundary Conditions</span>
<span class="t" id="tr10" style="left:80.8px;top:337.0px;font-size:13px;color:#222;">Constraint</span>
<span class="t" id="tr11" style="left:80.8px;top:361.0px;font-size:13px;color:#222;">Load</span>
<span class="t" id="tr12" style="left:80.8px;top:385.0px;font-size:13px;color:#222;">Temperature</span>
<span class="t" id="tr13" style="left:80.8px;top:409.0px;font-size:13px;color:#222;">Heat flux</span>
<span class="t" id="tr14" style="left:49.2px;top:433.0px;font-size:13px;color:#222;">Numerics</span>
<span class="t" id="tr15" style="left:49.2px;top:457.0px;font-size:13px;color:#222;">Simulation Control</span>
<span class="t" id="tr16" style="left:49.8px;top:478.0px;font-size:13px;color:#222;">Result Control</span>
<span class="t" id="tr17" style="left:49.2px;top:499.0px;font-size:13px;color:#222;">Simulation Runs</span>
<span class="t" id="trs" style="left:61.2px;top:211.0px;font-size:13px;color:#1a7aaf;font-weight:bold;text-decoration:underline;">&nbsp;Topological Entity Sets</span>
<span class="t" id="js" style="left:14.4px;top:925.0px;font-size:14px;color:#1a7aaf;transform:scaleX(0.8828);">Job Status</span>
<span class="t" id="jn" style="left:15.4px;top:958.0px;font-size:13px;color:#333333;font-weight:bold;">Name</span>
<span class="t" id="jst" style="left:139.2px;top:958.0px;font-size:13px;color:#333333;font-weight:bold;">Status</span>
<span class="t" id="jne" style="left:100.8px;top:979.0px;font-size:14px;color:#333333;transform:scaleX(0.9123);">no entities available</span>
<span class="t" id="m1" style="left:336.0px;top:61.0px;font-size:24px;color:#333333;transform:scaleX(1.0159);">Topological Entity Sets</span>
<span class="t" id="m2" style="left:336.3px;top:116.0px;font-size:14px;color:#333333;font-style:italic;transform:scaleX(0.8199);">You can group topological entities (volumes, faces, edges or nodes) to sets by selecting</span>
<span class="t" id="m3" style="left:336.3px;top:134.0px;font-size:14px;color:#333333;font-style:italic;transform:scaleX(0.8476);">them in the viewer and creating a new topological entity set.</span>
<span class="t" id="m4" style="left:336.3px;top:172.0px;font-size:14px;color:#333333;transform:scaleX(0.9473);">Filter for entity types</span>
<span class="t" id="m5" style="left:595.4px;top:181.0px;font-size:13px;color:#444;">face sets</span>
<span class="t" id="m6" style="left:352.2px;top:235.0px;font-size:13px;color:#333333;font-weight:bold;">Name</span>
<span class="t" id="m7" style="left:616.6px;top:235.0px;font-size:13px;color:#333333;font-weight:bold;"># Entities</span>
<span class="t" id="m8" style="left:730.0px;top:235.0px;font-size:13px;color:#333333;font-weight:bold;">Actions</span>
<span class="t" id="m9" style="left:352.2px;top:265.0px;font-size:13px;color:#222;">board_contacts</span>
<span class="t" id="m10" style="left:655.0px;top:265.0px;font-size:13px;color:#222;">24</span>
<span class="t" id="m11" style="left:352.2px;top:300.0px;font-size:13px;color:#222;">component_contacts</span>
<span class="t" id="m12" style="left:655.0px;top:300.0px;font-size:13px;color:#222;">12</span>
<span class="t" id="m13" style="left:359.0px;top:518.0px;font-size:12px;color:#1a7aaf;">Create entity set from selection</span>
<span class="t" id="s0" style="left:1663.2px;top:129.0px;font-size:11px;color:#6c9cba;">Scene</span>
<span class="t" id="s1" style="left:1679.0px;top:148.0px;font-size:11px;color:#6c9cba;">pcb-simplified - ref_mesh</span>
<span class="t" id="sv0" style="left:1713.0px;top:169.0px;font-size:11px;color:#4a98c8;font-weight:bold;">volumeOnGeoVolumes_10</span>
<span class="t" id="sv1" style="left:1713.0px;top:189.0px;font-size:11px;color:#4a98c8;font-weight:bold;">volumeOnGeoVolumes_9</span>
<span class="t" id="sv2" style="left:1713.0px;top:208.0px;font-size:11px;color:#4a98c8;font-weight:bold;">volumeOnGeoVolumes_8</span>
<span class="t" id="sv3" style="left:1713.0px;top:228.0px;font-size:11px;color:#4a98c8;font-weight:bold;">volumeOnGeoVolumes_7</span>
<span class="t" id="sv4" style="left:1713.0px;top:248.0px;font-size:11px;color:#4a98c8;font-weight:bold;">volumeOnGeoVolumes_6</span>
<span class="t" id="sv5" style="left:1713.0px;top:268.0px;font-size:11px;color:#4a98c8;font-weight:bold;">volumeOnGeoVolumes_5</span>
<span class="t" id="sv6" style="left:1713.0px;top:288.0px;font-size:11px;color:#4a98c8;font-weight:bold;">volumeOnGeoVolumes_4</span>
<span class="t" id="sv7" style="left:1713.0px;top:308.0px;font-size:11px;color:#4a98c8;font-weight:bold;">volumeOnGeoVolumes_3</span>
<span class="t" id="sv8" style="left:1713.0px;top:328.0px;font-size:11px;color:#4a98c8;font-weight:bold;">volumeOnGeoVolumes_2</span>
<span class="t" id="sv9" style="left:1713.0px;top:348.0px;font-size:11px;color:#4a98c8;font-weight:bold;">volumeOnGeoVolumes_1</span>
<span class="t" id="sv10" style="left:1713.0px;top:368.0px;font-size:11px;color:#4a98c8;font-weight:bold;">volumeOnGeoVolumes_0</span>
<span class="t" id="s2" style="left:1695.1px;top:388.0px;font-size:11px;color:#6c9cba;">Topological Entity Sets</span>
<span class="t" id="s3" style="left:1718.1px;top:411.0px;font-size:11px;color:#6c9cba;">board_contacts</span>
<span class="t" id="s4" style="left:1718.1px;top:437.0px;font-size:11px;color:#6c9cba;">component_contacts</span>
<span class="t" id="fg" style="left:832.9px;top:1081.0px;font-size:11px;color:#9fb4c2;">faceGroupOnGeoFaces_0</span>
<span class="t" id="rb" style="left:1808.7px;top:1090.0px;font-size:12px;color:#fff;">Report a bug</span>
</body></html>
